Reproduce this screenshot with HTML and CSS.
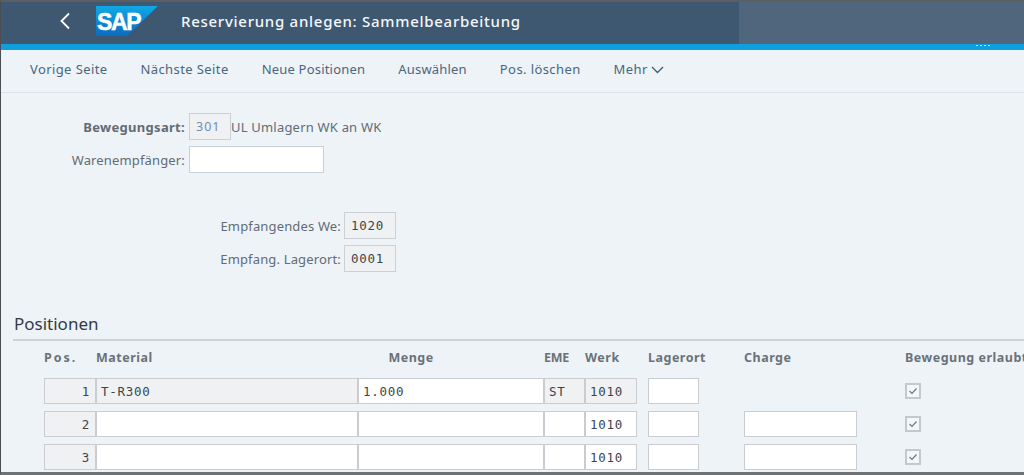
FILE: index.html
```html
<!DOCTYPE html>
<html lang="de">
<head>
<meta charset="utf-8">
<title>Reservierung anlegen: Sammelbearbeitung</title>
<link rel="stylesheet" href="styles.css">
</head>
<body>
<div class="frame">
  <header class="shell">
    <div class="shell-main">
      <svg class="back" width="12" height="18" viewBox="0 0 12 18"><path d="M10 1.500 2.500 9l7.500 7.500" fill="none" stroke="#fff" stroke-width="1.800"/></svg>
      <div class="logo">
        <svg width="62" height="31" viewBox="0 0 62 31"><defs><linearGradient id="g" x1="0" y1="0" x2="0" y2="1"><stop offset="0" stop-color="#10a8e6"/><stop offset="1" stop-color="#0b6cc0"/></linearGradient></defs><polygon points="0,0 62,0 31,30 0,30" fill="url(#g)"/></svg>
        <span class="logo-text">SAP</span>
      </div>
      <h1 class="title">Reservierung anlegen: Sammelbearbeitung</h1>
    </div>
    <div class="shell-side"></div>
  </header>
  <div class="accent"><span class="dots"></span></div>
  <nav class="toolbar">
    <span class="tool">Vorige Seite</span>
    <span class="tool">Nächste Seite</span>
    <span class="tool tool-tight">Neue Positionen</span>
    <span class="tool tool-tight">Auswählen</span>
    <span class="tool">Pos. löschen</span>
    <span class="tool">Mehr <svg class="chev" width="13" height="8" viewBox="0 0 13 8"><path d="M1 1l5.500 5.500L12 1" fill="none" stroke="#3f5b72" stroke-width="1.300"/></svg></span>
  </nav>
  <main class="content">
    <section class="form-a">
      <div class="row">
        <label class="lbl lbl-a strong">Bewegungsart:</label>
        <div class="field ro small-f blue">301</div>
        <span class="desc">UL Umlagern WK an WK</span>
      </div>
      <div class="row">
        <label class="lbl lbl-a">Warenempfänger:</label>
        <div class="field wide-f"></div>
      </div>
    </section>
    <section class="form-b">
      <div class="row">
        <label class="lbl lbl-b">Empfangendes We:</label>
        <div class="field ro plant-f mono">1020</div>
      </div>
      <div class="row">
        <label class="lbl lbl-b">Empfang. Lagerort:</label>
        <div class="field ro plant-f mono">0001</div>
      </div>
    </section>
    <h2 class="section-title">Positionen</h2>
    <div class="table">
      <div class="th pos">Pos.</div><div class="th">Material</div><div class="th center">Menge</div><div class="th tight">EME</div><div class="th">Werk</div><div></div><div class="th">Lagerort</div><div></div><div class="th">Charge</div><div></div><div class="th">Bewegung erlaubt</div>

      <div class="cell ro mono right">1</div><div class="cell ro mono">T-R300</div><div class="cell mono">1.000</div><div class="cell ro mono">ST</div><div class="cell ro mono">1010</div><div></div><div class="cell"></div><div></div><div></div><div></div><div class="checkcell"><span class="check"><svg width="10" height="8" viewBox="0 0 10 8"><path d="M1.500 4 4 6.500 8.500 1.500" fill="none" stroke="#5f7d84" stroke-width="1.200"/></svg></span></div>

      <div class="cell ro mono right">2</div><div class="cell"></div><div class="cell"></div><div class="cell"></div><div class="cell mono">1010</div><div></div><div class="cell"></div><div></div><div class="cell"></div><div></div><div class="checkcell"><span class="check"><svg width="10" height="8" viewBox="0 0 10 8"><path d="M1.500 4 4 6.500 8.500 1.500" fill="none" stroke="#5f7d84" stroke-width="1.200"/></svg></span></div>

      <div class="cell ro mono right">3</div><div class="cell"></div><div class="cell"></div><div class="cell"></div><div class="cell mono">1010</div><div></div><div class="cell"></div><div></div><div class="cell"></div><div></div><div class="checkcell"><span class="check"><svg width="10" height="8" viewBox="0 0 10 8"><path d="M1.500 4 4 6.500 8.500 1.500" fill="none" stroke="#5f7d84" stroke-width="1.200"/></svg></span></div>
    </div>
  </main>
</div>
</body>
</html>
```
FILE: styles.css
```css
* { box-sizing: border-box; }
html, body { margin: 0; height: 475px; overflow: hidden; }
body { font-family: "Noto Sans", "Open Sans", sans-serif; background: #eef3f8; color: #4a5a66; }
.frame { height: 475px; border-top: 2px solid #5a5f63; border-left: 1px solid #4a4f53; border-bottom: 3px solid #6e7275; background: #eef3f8; overflow: hidden; }

.shell { display: flex; height: 42px; }
.shell-main { width: 738px; background: #3e5871; display: flex; align-items: center; color: #fff; }
.shell-side { flex: 1; background: #4f667d; }
.back { margin-left: 58px; margin-bottom: 4px; }
.logo { position: relative; margin-left: 25px; width: 62px; height: 31px; margin-top: -3px; }
.logo svg { display: block; }
.logo-text { position: absolute; left: 1px; top: 3px; font: bold 23px/26px "Liberation Sans", sans-serif; letter-spacing: -1.400px; color: #fff; -webkit-text-stroke: .5px #fff; }
.title { margin: 0 0 5px 23px; font-size: 15px; font-weight: 500; letter-spacing: .72px; color: #f4f7fa; white-space: nowrap; }

.accent { height: 6px; background: #0f9fdd; display: flex; justify-content: flex-end; padding-right: 34px; }
.dots { width: 14px; height: 1px; margin-top: 1px; background: repeating-linear-gradient(90deg, #bfe6f7 0 2px, transparent 2px 4px); }

.toolbar { height: 43px; display: flex; align-items: center; gap: 33px; padding: 0 0 4px 29px; border-bottom: 1px solid #d8e2ea; background: #eef3f8; font-size: 13px; letter-spacing: .4px; color: #4a667c; }
.tool { white-space: nowrap; }
.tool-tight { letter-spacing: .2px; }
.chev { margin-left: 0; }

.content { padding-top: 20px; }
.row { display: flex; align-items: center; height: 27px; margin-bottom: 6px; }
.lbl { text-align: right; padding-right: 4px; font-size: 13px; letter-spacing: .15px; color: #626c75; white-space: nowrap; }
.lbl-a { width: 188px; }
.lbl-b { width: 343px; padding-right: 3px; }
.strong { font-weight: 700; letter-spacing: .3px; }
.field { height: 27px; border: 1px solid #c9d0d6; background: #fff; font-size: 12px; line-height: 25px; padding-left: 6px; }
.ro { background: #eff1f3; }
.small-f { width: 42px; }
.wide-f { width: 135px; }
.plant-f { width: 52px; }
.blue { color: #6f8fb0; font-size: 12.500px; letter-spacing: 1px; }
.desc { margin-left: 0; font-size: 13px; letter-spacing: .2px; color: #626c75; }
.field.mono, .cell.mono { font-family: "DejaVu Sans Mono", monospace; font-size: 12.500px; letter-spacing: .7px; color: #3d454a; }
.form-b { margin-top: 39px; }

.section-title { margin: 39px 0 0 12px; padding: 0 0 3px 1px; font-size: 17px; font-weight: 400; line-height: 25px; color: #333c42; border-bottom: 2px solid #cdd2d6; }

.table { display: grid; grid-template-columns: 52px 262px 186px 41px 52px 11px 51px 45px 113px 48px 1fr; grid-template-rows: 30px 26px 26px 26px; row-gap: 7px; padding-left: 43px; }
.table > div { min-width: 0; }
.th { align-self: center; padding-top: 3px; font-size: 12.500px; letter-spacing: .5px; font-weight: 700; color: #6a7278; white-space: nowrap; }
.pos { letter-spacing: 2px; }
.tight { letter-spacing: -.3px; }
.center { text-align: center; padding-right: 80px; }
.cell { border: 1px solid #c9cdd1; background: #fff; line-height: 25px; padding-left: 4px; font-size: 12px; }
.cell.ro { background: #eff1f3; }
.cell.right { text-align: right; padding-right: 5px; }
.checkcell { display: flex; align-items: center; }
.check { width: 16px; height: 16px; border: 2px solid #c3c8cc; background: #f4f6f8; display: flex; align-items: center; justify-content: center; }
```
